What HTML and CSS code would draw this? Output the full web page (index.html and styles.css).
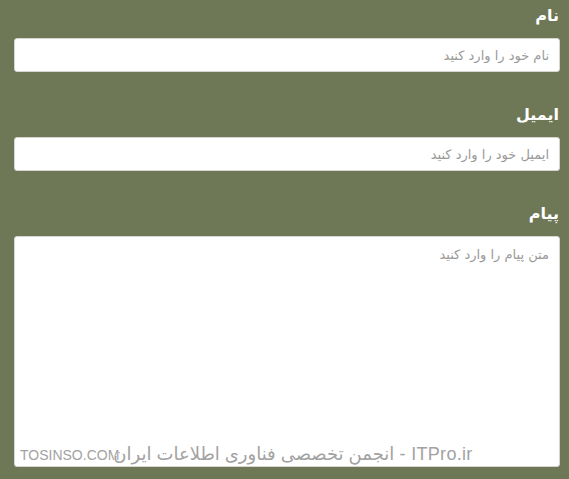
FILE: index.html
```html
<!DOCTYPE html>
<html lang="fa" dir="rtl">
<head>
<meta charset="utf-8">
<link rel="stylesheet" href="styles.css">
</head>
<body>
<form class="form">
  <div class="field">
    <label class="label">نام</label>
    <input class="input" type="text" placeholder="نام خود را وارد کنید">
  </div>
  <div class="field">
    <label class="label">ایمیل</label>
    <input class="input" type="text" placeholder="ایمیل خود را وارد کنید">
  </div>
  <div class="field">
    <label class="label">پیام</label>
    <textarea class="textarea" placeholder="متن پیام را وارد کنید"></textarea>
  </div>
</form>
<div class="watermark" dir="ltr">
  <span class="wm-small">TOSINSO.COM</span><span class="wm-big" dir="rtl">ITPro.ir - انجمن تخصصی فناوری اطلاعات ایران</span>
</div>
</body>
</html>
```
FILE: styles.css
```css
html, body {
  margin: 0;
  padding: 0;
  background: #6e7756;
  height: 100%;
  overflow: hidden;
}
body {
  font-family: "DejaVu Sans", sans-serif;
  position: relative;
}
.form {
  display: flex;
  flex-direction: column;
  padding: 4px 9px 0 14px;
}
.field {
  display: flex;
  flex-direction: column;
}
.field + .field {
  margin-top: 31px;
}
.label {
  color: #ffffff;
  font-weight: bold;
  font-size: 16px;
  line-height: 24px;
  padding-right: 1px;
  margin-bottom: 10px;
}
.input, .textarea {
  box-sizing: border-box;
  width: 100%;
  border: 1px solid #d6d6d0;
  border-radius: 3px;
  background: #ffffff;
  font-family: "DejaVu Sans", sans-serif;
  font-size: 13px;
  color: #555;
  padding: 0 10px;
  margin: 0;
  outline: none;
}
.input {
  height: 34px;
}
.textarea {
  height: 231px;
  padding-top: 10px;
  resize: none;
}
.input::placeholder, .textarea::placeholder {
  color: #9a9a9a;
}
.watermark {
  position: absolute;
  left: 20px;
  top: 443px;
  display: flex;
  align-items: baseline;
  white-space: nowrap;
  color: #a2a2a2;
  text-shadow: 0 0 1px #fff, 0 0 1px #fff, 0 0 1px #fff;
}
.wm-small {
  font-family: "Liberation Sans", sans-serif;
  font-size: 14px;
  margin-right: -6px;
}
.wm-big {
  font-family: "Liberation Sans", "DejaVu Sans", sans-serif;
  font-size: 18px;
  letter-spacing: 0.3px;
}
```
